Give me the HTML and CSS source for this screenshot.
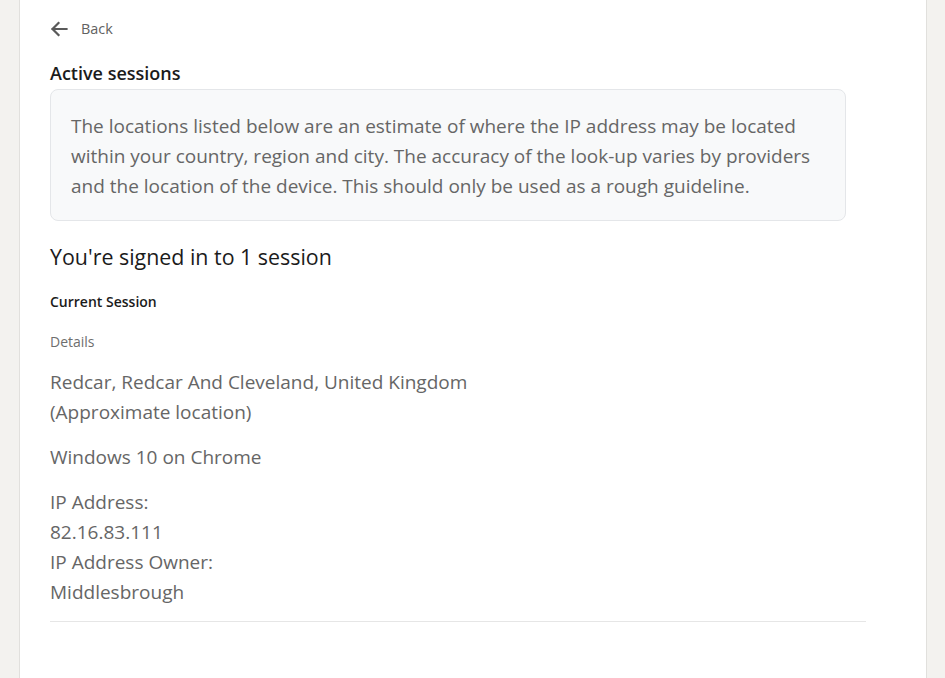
FILE: index.html
```html
<!DOCTYPE html>
<html lang="en">
<head>
<meta charset="utf-8">
<title>Active sessions</title>
<link rel="stylesheet" href="styles.css">
</head>
<body>
<div class="shell">
  <main class="panel">
    <div class="content">
      <a class="back" href="#">
        <svg class="back-icon" width="18" height="16" viewBox="0 0 18 16" aria-hidden="true">
          <path d="M16.5 8H2.5M8.5 2L2.5 8L8.5 14" fill="none" stroke="#5a5a5a" stroke-width="2.2" stroke-linecap="square" stroke-linejoin="miter"/>
        </svg>
        <span>Back</span>
      </a>
      <h1 class="title">Active sessions</h1>
      <div class="notice">
        The locations listed below are an estimate of where the IP address may be located within your country, region and city. The accuracy of the look-up varies by providers and the location of the device. This should only be used as a rough guideline.
      </div>
      <h2 class="count">You're signed in to 1 session</h2>
      <section class="session">
        <h3 class="session-title">Current Session</h3>
        <div class="label">Details</div>
        <p class="detail">Redcar, Redcar And Cleveland, United Kingdom<br>(Approximate location)</p>
        <p class="detail">Windows 10 on Chrome</p>
        <p class="detail">IP Address:<br>82.16.83.111<br>IP Address Owner:<br>Middlesbrough</p>
      </section>
    </div>
  </main>
</div>
</body>
</html>
```
FILE: styles.css
```css
html, body {
  margin: 0;
  padding: 0;
  height: 100%;
}
body {
  background: #f3f2ef;
  font-family: "Open Sans", "Noto Sans", "Liberation Sans", sans-serif;
  color: #1b1b1b;
}
.shell {
  display: flex;
  min-height: 100%;
  padding-left: 19px;
}
.panel {
  width: 908px;
  background: #ffffff;
  border-left: 1px solid #e1e0dd;
  border-right: 1px solid #e1e0dd;
  padding: 19px 0 40px 30px;
  box-sizing: border-box;
}
.content {
  width: 816px;
}
.back {
  display: inline-flex;
  align-items: center;
  gap: 13px;
  color: #616161;
  text-decoration: none;
  font-size: 14.4px;
  line-height: 20px;
}
.back-icon {
  display: block;
}
.title {
  margin: 19px 0 0;
  font-size: 18px;
  font-weight: 600;
  line-height: 24px;
  color: #1b1b1b;
}
.notice {
  margin-top: 4px;
  width: 796px;
  box-sizing: border-box;
  background: #f8f9fa;
  border: 1px solid #e4e6e9;
  border-radius: 8px;
  padding: 21px 20px 19px 20px;
  font-size: 19px;
  line-height: 30px;
  color: #666666;
}
.count {
  margin: 21px 0 0;
  font-size: 21.4px;
  font-weight: 400;
  line-height: 30px;
  color: #1b1b1b;
}
.session {
  border-bottom: 1px solid #e6e6e6;
  padding-bottom: 14px;
}
.session-title {
  margin: 20px 0 0;
  font-size: 14px;
  font-weight: 600;
  line-height: 20px;
  color: #1b1b1b;
}
.label {
  margin-top: 20px;
  font-size: 14px;
  line-height: 20px;
  color: #6e6e6e;
}
.detail {
  margin: 15px 0 0;
  font-size: 19px;
  line-height: 30px;
  color: #666666;
}
```
